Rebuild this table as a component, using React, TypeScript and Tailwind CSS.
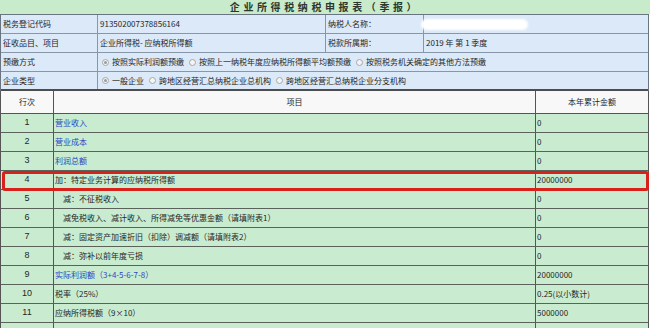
import React from "react";

/* =====================================================
   DATA
===================================================== */
type Row = {
  no: string;
  item: string;
  amount: string;
  link?: boolean;
  indent?: boolean;
};

const rows: Row[] = [
  { no: "1", item: "营业收入", amount: "0", link: true },
  { no: "2", item: "营业成本", amount: "0", link: true },
  { no: "3", item: "利润总额", amount: "0", link: true },
  { no: "4", item: "加：特定业务计算的应纳税所得额", amount: "20000000" },
  { no: "5", item: "减：不征税收入", amount: "0", indent: true },
  { no: "6", item: "减免税收入、减计收入、所得减免等优惠金额（请填附表1）", amount: "0", indent: true },
  { no: "7", item: "减：固定资产加速折旧（扣除）调减额（请填附表2）", amount: "0", indent: true },
  { no: "8", item: "减：弥补以前年度亏损", amount: "0", indent: true },
  { no: "9", item: "实际利润额（3+4-5-6-7-8）", amount: "20000000", link: true },
  { no: "10", item: "税率（25%）", amount: "0.25(以小数计)" },
  { no: "11", item: "应纳所得税额（9×10）", amount: "5000000" },
  { no: "12", item: "", amount: "" },
];

/* =====================================================
   SMALL COMPONENTS
===================================================== */
const Radio = ({ checked, label }: { checked?: boolean; label: string }) => (
  <span className="flex items-center gap-[3px] mr-[5px]">
    <span className="w-[7px] h-[7px] rounded-full border border-[#a8a8a8] bg-[#f4f4f4] flex items-center justify-center">
      {checked && <span className="w-[3px] h-[3px] rounded-full bg-[#9a9a9a]" />}
    </span>
    <span>{label}</span>
  </span>
);

/* =====================================================
   MAIN COMPONENT
===================================================== */
const App: React.FC = () => {
  return (
    <div className="relative w-[650px] h-[328px] overflow-hidden bg-white text-[8px] text-[#262626] font-['Noto_Sans_CJK_SC','Noto_Sans',sans-serif]">
      {/* title */}
      <div className="h-[14px] bg-[#c8ebcb] text-center text-[10px] leading-[14px] font-bold tracking-[3.6px] text-[#2e372e]">
        企业所得税纳税申报表（季报）
      </div>

      {/* info block */}
      <div className="w-[649px] border-t border-l border-r border-[#6a7480] bg-[#dbe9f8]">
        <div className="flex h-[19px] border-b border-[#8797a8]">
          <div className="w-[97px] border-r border-[#8797a8] flex items-center pl-[2px]">税务登记代码</div>
          <div className="w-[228px] border-r border-[#8797a8] flex items-center pl-[2px]">913502007378856164</div>
          <div className="w-[98px] border-r border-[#8797a8] flex items-center pl-[2px]">纳税人名称：</div>
          <div className="relative flex-1 flex items-center">
            <span className="absolute left-[-3px] top-[4px] w-[107px] h-[11px] rounded-full bg-white blur-[1px]" />
          </div>
        </div>
        <div className="flex h-[19px] border-b border-[#8797a8]">
          <div className="w-[97px] border-r border-[#8797a8] flex items-center pl-[2px]">征收品目、项目</div>
          <div className="w-[228px] border-r border-[#8797a8] flex items-center pl-[2px]">企业所得税- 应纳税所得额</div>
          <div className="w-[98px] border-r border-[#8797a8] flex items-center pl-[2px]">税款所属期：</div>
          <div className="flex-1 flex items-center pl-[2px]">2019 年 第 1 季度</div>
        </div>
        <div className="flex h-[19px] border-b border-[#8797a8]">
          <div className="w-[97px] border-r border-[#8797a8] flex items-center pl-[2px]">预缴方式</div>
          <div className="flex-1 flex items-center pl-[4px]">
            <Radio checked label="按照实际利润额预缴" />
            <Radio label="按照上一纳税年度应纳税所得额平均额预缴" />
            <Radio label="按照税务机关确定的其他方法预缴" />
          </div>
        </div>
        <div className="flex h-[19px] border-b-2 border-[#4d4d4d]">
          <div className="w-[97px] border-r border-[#8797a8] flex items-center pl-[2px]">企业类型</div>
          <div className="flex-1 flex items-center pl-[4px]">
            <Radio checked label="一般企业" />
            <Radio label="跨地区经营汇总纳税企业总机构" />
            <Radio label="跨地区经营汇总纳税企业分支机构" />
          </div>
        </div>
      </div>

      {/* main table */}
      <div className="w-[649px] border-l border-r border-[#555]">
        <div className="flex h-[23px] bg-[#f8f8f8] border-b border-[#555]">
          <div className="w-[53px] border-r border-[#555] flex items-center justify-center">行次</div>
          <div className="flex-1 border-r border-[#555] flex items-center justify-center">项目</div>
          <div className="w-[112px] flex items-center justify-center">本年累计金额</div>
        </div>

        {rows.map((r) => (
          <div key={r.no} className="flex h-[19px] bg-[#c9ecd0] border-b border-[#5b615b]">
            <div className="w-[53px] border-r border-[#555] flex items-center justify-center text-[9px] font-['Liberation_Sans',sans-serif]">
              {r.no === "12" ? "" : r.no}
            </div>
            <div
              className={`flex-1 border-r border-[#555] flex items-center ${r.indent ? "pl-[9px]" : "pl-px"} ${
                r.link ? "text-[#2a45c4]" : ""
              }`}
            >
              {r.item}
            </div>
            <div className="w-[112px] flex items-center pl-px">{r.amount}</div>
          </div>
        ))}
      </div>

      {/* red annotation around row 4 */}
      <div className="absolute left-[2px] top-[171px] w-[647px] h-[20px] border-[3px] border-[#d8211b] rounded-[3px]" />
    </div>
  );
};

export default App;
